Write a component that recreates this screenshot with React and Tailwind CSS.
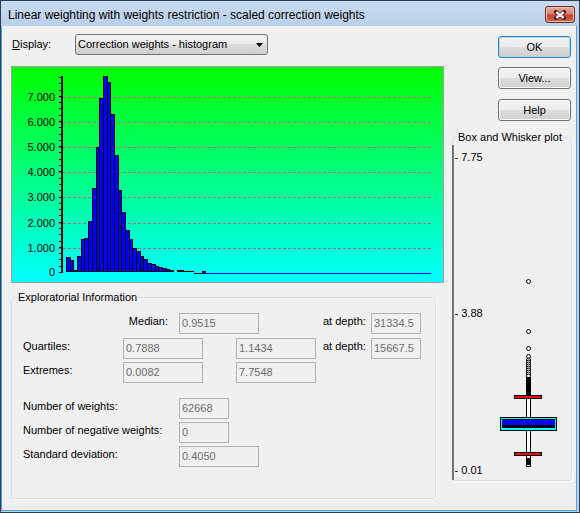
const tops = [
  257, 260, 270, 256, 239, 238, 221, 188, 147, 98, 76, 82, 114, 155, 190, 212, 230, 239, 248, 251,
  256, 259, 263, 264, 266, 267, 268, 269, 270, 271,
];

const gridYs = [248, 223, 197, 172, 147, 122, 97];
const yLabels = [
  { y: 272, t: "0" },
  { y: 248, t: "1.000" },
  { y: 223, t: "2.000" },
  { y: 197, t: "3.000" },
  { y: 172, t: "4.000" },
  { y: 147, t: "5.000" },
  { y: 122, t: "6.000" },
  { y: 97, t: "7.000" },
];

const FONT = "Liberation Sans, Arial, sans-serif";

const Histogram = () => {
  const xs = tops.map((_, i) => Math.round(66 + i * 3.69));
  xs.push(177);
  const ticks = [];
  for (let k = 0; k < 32; k++) ticks.push(Math.round(272 - 6.29 * k));
  // dashes of the grid lines, 3px on / 2px off
  const dashes = [];
  for (let x = 58; x < 430; x += 5) dashes.push(x);

  return (
    <svg width="431" height="215" viewBox="12 67 431 215" className="block">
      {gridYs.map((y) =>
        dashes.map((x) => (
          <rect key={`${y}-${x}`} x={x} y={y} width="3" height="1" fill="#9c7288" />
        ))
      )}
      {tops.map((top, i) => (
        <rect
          key={i}
          x={xs[i] + 0.5}
          y={top + 0.5}
          width={xs[i + 1] - xs[i]}
          height={271 - top}
          fill="#0000ff"
          stroke="#000"
          shapeRendering="crispEdges"
        />
      ))}
      {/* tail of tiny bars */}
      <rect x="177.5" y="270.5" width="6" height="1" fill="#0000ff" stroke="#000" shapeRendering="crispEdges" />
      <rect x="183" y="271" width="11" height="1" fill="#000" />
      <rect x="194" y="273" width="9" height="1" fill="#000" />
      <rect x="202.5" y="271.5" width="3" height="2" fill="#0000ff" stroke="#000" shapeRendering="crispEdges" />
      <rect x="206" y="273" width="225" height="1" fill="#0000ff" />
      {/* y axis */}
      <rect x="61" y="76" width="2" height="197" fill="#000" />
      {ticks.map((y) => (
        <rect key={y} x="59" y={y} width="2" height="1" fill="#000" />
      ))}
      {yLabels.map((l) => (
        <text key={l.t} x="55" y={l.y + 4} textAnchor="end" fontSize="11" fontFamily={FONT} fill="#000">
          {l.t}
        </text>
      ))}
    </svg>
  );
};

const BoxPlot = () => {
  const outliers = [281.5, 331.5, 348.5, 356.5, 360, 362, 364, 366, 368, 370, 372, 374, 376];
  return (
    <svg width="118" height="342" viewBox="453 138 118 342" className="block overflow-visible">
      <rect x="452.5" y="145" width="1" height="335" fill="#000" />
      {[
        { y: 160.7, t: "- 7.75" },
        { y: 316.7, t: "- 3.88" },
        { y: 474, t: "- 0.01" },
      ].map((l) => (
        <text key={l.t} x="454.5" y={l.y} fontSize="11" fontFamily={FONT} fill="#000">
          {l.t}
        </text>
      ))}
      {outliers.map((y) => (
        <circle key={y} cx="528.5" cy={y} r="2" fill="#fff" stroke="#000" strokeWidth="1" />
      ))}
      <g shapeRendering="crispEdges">
        <rect x="526" y="377" width="5" height="19" fill="#000" />
        {/* upper whisker */}
        <rect x="526" y="398" width="5" height="19" fill="#000" />
        <rect x="527" y="399" width="3" height="18" fill="#fff" />
        <rect x="514" y="395" width="28" height="4" fill="#000" />
        <rect x="515" y="396" width="26" height="2" fill="#ff0000" />
        {/* box */}
        <rect x="500" y="417" width="57" height="14" fill="#000" />
        <rect x="501" y="418" width="55" height="12" fill="#00ffff" />
        <rect x="502" y="419" width="53" height="9" fill="#000" />
        <rect x="502" y="420" width="53" height="5" fill="#0000ff" />
        {/* lower whisker */}
        <rect x="526" y="431" width="5" height="22" fill="#000" />
        <rect x="527" y="431" width="3" height="21" fill="#fff" />
        <rect x="514" y="452" width="28" height="4" fill="#000" />
        <rect x="515" y="453" width="26" height="2" fill="#ff0000" />
        <rect x="526" y="456" width="5" height="11" fill="#000" />
        <rect x="527" y="456" width="3" height="2" fill="#fff" />
        <rect x="527" y="465" width="3" height="1" fill="#fff" />
      </g>
    </svg>
  );
};

const Field = ({ w, children }) => (
  <div className={`${w} h-[21px] border border-[#adb2b5] bg-[#f0f0f0] pl-[2px] flex items-center text-[#6d6d6d]`}>
    {children}
  </div>
);

const btn =
  "w-[73px] h-[22px] self-end mr-[1px] rounded-[3px] border flex items-center justify-center bg-[linear-gradient(to_bottom,#f2f2f2_0%,#ebebeb_50%,#dddddd_50%,#cfcfcf_100%)]";

export default function App() {
  return (
    <div className="w-[580px] h-[513px] flex flex-col overflow-hidden border border-[#2b3d52] bg-[#b9d1ea] font-['Liberation_Sans',Arial,sans-serif] text-[11px] leading-[13px] text-black">
      {/* title bar */}
      <div className="h-[25px] shrink-0 flex items-start justify-between pl-[7px] pr-[4px] bg-[linear-gradient(to_bottom,#c8dbef,#b9d0e9)]">
        <span className="mt-[7px] text-[12px] leading-[15px]">
          Linear weighting with weights restriction - scaled correction weights
        </span>
        <button className="mt-[5px] w-[30px] h-[17px] rounded-[3px] border border-[#6b2a22] flex items-center justify-center bg-[linear-gradient(to_bottom,#e9aa9f_0%,#d98072_45%,#c2402f_55%,#d0624e_100%)] shadow-[inset_0_0_0_1px_#f0c0b8]">
          <svg width="12" height="10" viewBox="0 0 12 10">
            <path d="M2 2L10 8M10 2L2 8" stroke="#4a1d18" strokeWidth="4" strokeLinecap="round" />
            <path d="M2.3 2.2L9.7 7.8M9.7 2.2L2.3 7.8" stroke="#fff" strokeWidth="2.2" />
          </svg>
        </button>
      </div>

      {/* client area */}
      <div className="flex-1 mr-[2px] mb-[1px] border-x border-b border-[#4aa7dc] bg-[#f0f0f0] flex">
        {/* left column */}
        <div className="w-[442px] flex flex-col">
          <div className="mt-[8px] h-[21px] flex items-center pl-[10px]">
            <span className="w-[63px] mb-[1px]">
              <span className="underline">D</span>isplay:
            </span>
            <div className="w-[193px] h-[21px] rounded-[3px] border border-[#707070] flex items-center justify-between pl-[2px] pr-[4px] bg-[linear-gradient(to_bottom,#f2f2f2_0%,#ebebeb_50%,#dddddd_50%,#cfcfcf_100%)]">
              <span>Correction weights - histogram</span>
              <svg width="7" height="4" viewBox="0 0 7 4">
                <path d="M0 0H7L3.5 4Z" fill="#000" />
              </svg>
            </div>
          </div>

          <div className="ml-[9px] mt-[11px] w-[433px] h-[217px] border border-[#a0a0a0] bg-[linear-gradient(to_bottom,#00ff00,#00ffff)]">
            <Histogram />
          </div>

          <div className="relative ml-[9px] mt-[14px] w-[425px] h-[202px] rounded-[3px] border border-[#d5dfe5] shadow-[1px_1px_0_#fff]">
            <span className="absolute left-[5px] -top-[7px] px-[1px] bg-[#f0f0f0]">Exploratorial Information</span>

            <div className="mt-[15px] h-[21px] flex items-start">
              <div className="w-[156px] text-right pt-[2px]">Median:</div>
              <div className="ml-[11px]">
                <Field w="w-[80px]">0.9515</Field>
              </div>
              <div className="ml-[64px] w-[48px] pt-[2px]">at depth:</div>
              <Field w="w-[50px]">31334.5</Field>
            </div>

            <div className="mt-[4px] h-[21px] flex items-start pl-[11px]">
              <div className="w-[100px] pt-[2px]">Quartiles:</div>
              <Field w="w-[80px]">0.7888</Field>
              <div className="ml-[33px]">
                <Field w="w-[80px]">1.1434</Field>
              </div>
              <div className="ml-[7px] w-[48px] pt-[2px]">at depth:</div>
              <Field w="w-[50px]">15667.5</Field>
            </div>

            <div className="mt-[3px] h-[21px] flex items-start pl-[11px]">
              <div className="w-[100px] pt-[2px]">Extremes:</div>
              <Field w="w-[80px]">0.0082</Field>
              <div className="ml-[33px]">
                <Field w="w-[80px]">7.7548</Field>
              </div>
            </div>

            <div className="mt-[15px] h-[21px] flex items-start pl-[11px]">
              <div className="w-[156px] pt-[2px]">Number of weights:</div>
              <Field w="w-[50px]">62668</Field>
            </div>

            <div className="mt-[3px] h-[21px] flex items-start pl-[11px]">
              <div className="w-[156px] pt-[2px]">Number of negative weights:</div>
              <Field w="w-[50px]">0</Field>
            </div>

            <div className="mt-[3px] h-[21px] flex items-start pl-[11px]">
              <div className="w-[156px] pt-[2px]">Standard deviation:</div>
              <Field w="w-[80px]">0.4050</Field>
            </div>
          </div>
        </div>

        {/* right column */}
        <div className="ml-[8px] w-[120px] flex flex-col">
          <button className={`${btn} mt-[10px] border-[#3c7fb1] shadow-[inset_0_0_0_1px_#9fdcf8]`}>OK</button>
          <button className={`${btn} mt-[9px] border-[#707070] shadow-[inset_0_0_0_1px_#fafafa]`}>View...</button>
          <button className={`${btn} mt-[10px] border-[#707070] shadow-[inset_0_0_0_1px_#fafafa]`}>Help</button>

          <div className="relative mt-[16px] w-[120px] h-[344px] rounded-[3px] border border-[#d5dfe5] shadow-[1px_1px_0_#fff]">
            <span className="absolute left-[4px] -top-[7px] px-[1px] bg-[#f0f0f0]">Box and Whisker plot</span>
            <BoxPlot />
          </div>
        </div>
      </div>
    </div>
  );
}
